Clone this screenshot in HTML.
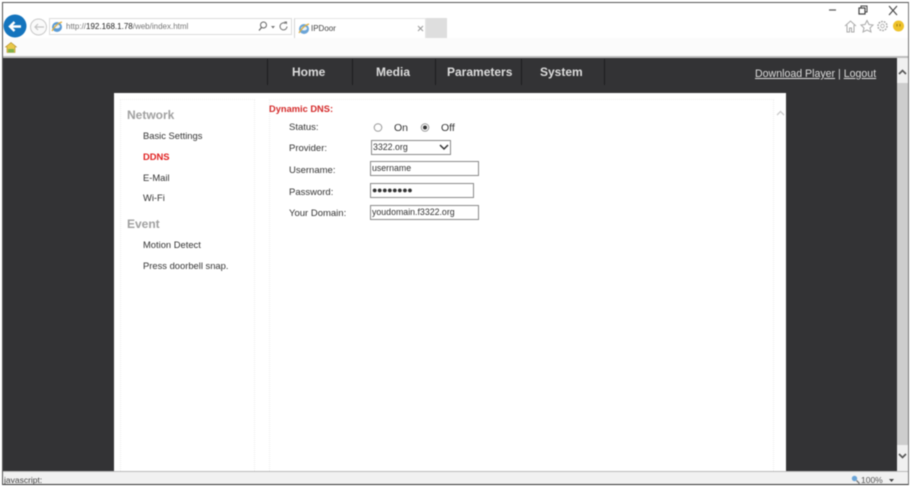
<!DOCTYPE html>
<html><head><meta charset="utf-8">
<style>
html,body{margin:0;padding:0;width:911px;height:487px;overflow:hidden;background:#fff;font-family:"Liberation Sans",sans-serif;}
#p{position:absolute;left:0;top:0;width:911px;height:487px;filter:blur(.4px);}
.a{position:absolute;white-space:nowrap;}
.l{font-size:9.500px;color:#333;}
.side{font-size:9.400px;color:#333;left:143px;}
.nav{font-size:12px;font-weight:bold;color:#ddd;top:65px;}
.sep{position:absolute;top:59px;width:1px;height:26px;background:#1d1d1f;}
.inp{position:absolute;box-sizing:border-box;border:1px solid #8a8a8a;background:#fff;height:15px;font-size:8.800px;color:#333;line-height:13px;padding-left:1px;white-space:nowrap;overflow:hidden;}
</style></head><body><div id="p">
<div class="a" style="left:2px;top:2px;width:907px;height:483px;box-sizing:border-box;border:1px solid #555;border-bottom:1px solid #333;border-right:1px solid #777;"></div>
<div class="a" style="left:3px;top:38px;width:905px;height:19px;background:#fbfbfb;"></div>
<svg class="a" style="left:3px;top:3px" width="60" height="36" viewBox="0 0 60 36">
<circle cx="12" cy="23" r="11.500" fill="#1474bd"/>
<path d="M18 23.500H7M11.500 19L7 23.500L11.500 28" stroke="#fff" stroke-width="2.400" fill="none"/>
<circle cx="35.500" cy="24" r="8" fill="#fafafa" stroke="#c9c9c9"/>
<path d="M41 24H32M35 21L32 24L35 27" stroke="#c4c4c4" stroke-width="1.200" fill="none"/>
</svg>
<div class="a" style="left:49px;top:18px;width:243px;height:17px;box-sizing:border-box;border:1px solid #dcdcdc;background:#fff;"></div>
<svg class="a" style="left:51px;top:20px" width="12" height="13" viewBox="0 0 12 13"><ellipse cx="6" cy="7" rx="5" ry="5" fill="#5b9bd5"/><ellipse cx="6" cy="6.500" rx="3" ry="2" fill="#e8f2fa"/><path d="M1 11C3 7 7 3 11 2" stroke="#e0b040" stroke-width="1.300" fill="none"/></svg>
<div class="a" style="left:66px;top:22px;font-size:8px;color:#777;">http://<span style="color:#222">192.168.1.78</span>/web/index.html</div>
<svg class="a" style="left:258px;top:20px" width="34" height="13" viewBox="0 0 34 13"><circle cx="5.500" cy="5" r="3" fill="none" stroke="#666" stroke-width="1"/><path d="M3.500 7.500L1 10.500" stroke="#666" stroke-width="1.200"/><path d="M13 6h4l-2 2.500z" fill="#777"/><path d="M27.500 3.500a3.500 3.500 0 1 0 1.500 3" fill="none" stroke="#777" stroke-width="1.100"/><path d="M26 1.500h3v3z" fill="#777"/></svg>
<div class="a" style="left:294px;top:18px;width:132px;height:20px;box-sizing:border-box;border-left:1px solid #d5d5d5;border-top:1px solid #e5e5e5;border-right:1px solid #e5e5e5;background:#fff;"></div>
<svg class="a" style="left:298px;top:22px" width="12" height="13" viewBox="0 0 12 13"><ellipse cx="6" cy="7" rx="5" ry="5" fill="#6ba5d8"/><ellipse cx="6" cy="6.500" rx="3" ry="2" fill="#e8f2fa"/><path d="M1 11C3 7 7 3 11 2" stroke="#e0b040" stroke-width="1.300" fill="none"/></svg>
<div class="a" style="left:311px;top:24px;font-size:8px;color:#444;">IPDoor</div>
<svg class="a" style="left:417px;top:25px" width="7" height="7" viewBox="0 0 7 7"><path d="M1 1L6 6M6 1L1 6" stroke="#999" stroke-width="1"/></svg>
<div class="a" style="left:426px;top:18px;width:21px;height:20px;background:#dedede;"></div>
<svg class="a" style="left:5px;top:42px" width="12" height="11" viewBox="0 0 12 11"><path d="M6 0.500L11.500 5H10V10.500H2V5H0.500z" fill="#e9c84a" stroke="#b08a20" stroke-width=".6"/><rect x="3" y="7" width="6" height="3.500" fill="#7fb24a"/></svg>
<svg class="a" style="left:826px;top:3px" width="82" height="31" viewBox="0 0 82 31">
<path d="M3 7H10" stroke="#555" stroke-width="1.200"/>
<rect x="33" y="5" width="6" height="6" fill="none" stroke="#444" stroke-width="1.200"/><path d="M35 5V3H41V9H39" fill="none" stroke="#444"/>
<path d="M63 3L71 12M71 3L63 12" stroke="#444" stroke-width="1.100"/>
<path d="M19 23L24.500 18L30 23M21 22V29H23.500V25H25.500V29H28V22" fill="none" stroke="#aaa" stroke-width="1"/>
<path d="M41 17.500L43 21.500L47 22L44 25L45 29L41 27L37 29L38 25L35 22L39 21.500z" fill="none" stroke="#aaa" stroke-width="1"/>
<circle cx="56.500" cy="23" r="4.500" fill="none" stroke="#aaa" stroke-width="1.500" stroke-dasharray="1.800 1"/><circle cx="56.500" cy="23" r="1.800" fill="none" stroke="#aaa" stroke-width=".8"/>
<circle cx="72.500" cy="23" r="5.500" fill="#eec22a"/><path d="M71 21V23.500M74 21V23.500" stroke="#8a6a10" stroke-width=".8"/>
</svg>

<div class="a" style="left:3px;top:56px;width:905px;height:2px;background:#bdbdbd;"></div>
<div class="a" style="left:3px;top:58px;width:894px;height:413px;background:#333335;"></div>
<div class="sep" style="left:267px"></div><div class="sep" style="left:352px"></div><div class="sep" style="left:435px"></div><div class="sep" style="left:521px"></div><div class="sep" style="left:604px"></div>
<div class="a nav" style="left:292px">Home</div>
<div class="a nav" style="left:376px">Media</div>
<div class="a nav" style="left:447px">Parameters</div>
<div class="a nav" style="left:540px">System</div>
<div class="a" style="left:755px;top:68px;font-size:10.600px;color:#ddd;"><u>Download Player</u> | <u>Logout</u></div>

<div class="a" style="left:897px;top:58px;width:11px;height:413px;background:#cdcdcd;"></div>
<div class="a" style="left:897px;top:58px;width:11px;height:25px;background:#f0f0f0;"></div>
<div class="a" style="left:897px;top:445px;width:11px;height:26px;background:#f0f0f0;"></div>
<svg class="a" style="left:897px;top:68px" width="11" height="8" viewBox="0 0 11 8"><path d="M2 6L5.500 2.500L9 6" fill="none" stroke="#555" stroke-width="1.600"/></svg>
<svg class="a" style="left:897px;top:452px" width="11" height="8" viewBox="0 0 11 8"><path d="M2 2L5.500 5.500L9 2" fill="none" stroke="#555" stroke-width="1.600"/></svg>

<div class="a" style="left:114px;top:93px;width:672px;height:378px;background:#fff;"></div>
<div class="a" style="left:120px;top:99px;width:135px;height:372px;box-sizing:border-box;border-left:1px dotted #eee;border-right:1px dotted #eee;border-top:1px dotted #f0f0f0;"></div>
<div class="a" style="left:269px;top:99px;width:505px;height:372px;box-sizing:border-box;border-left:1px dotted #eee;border-right:1px dotted #eee;border-top:1px dotted #f0f0f0;"></div>
<svg class="a" style="left:776px;top:110px" width="9" height="7" viewBox="0 0 9 7"><path d="M1 5L4.500 1.500L8 5" fill="none" stroke="#ccc" stroke-width="1.300"/></svg>

<div class="a" style="left:127px;top:108px;font-size:12px;font-weight:bold;color:#a0a0a0;">Network</div>
<div class="a side" style="top:130px">Basic Settings</div>
<div class="a side" style="top:151px;color:#e02020;font-weight:bold;">DDNS</div>
<div class="a side" style="top:172px">E-Mail</div>
<div class="a side" style="top:192px">Wi-Fi</div>
<div class="a" style="left:127px;top:217px;font-size:12px;font-weight:bold;color:#a0a0a0;">Event</div>
<div class="a side" style="top:239px">Motion Detect</div>
<div class="a side" style="top:260px">Press doorbell snap.</div>

<div class="a" style="left:269px;top:104px;font-size:9.300px;font-weight:bold;color:#d42a2a;">Dynamic DNS:</div>
<div class="a l" style="left:289px;top:122px">Status:</div>
<div class="a l" style="left:289px;top:143px">Provider:</div>
<div class="a l" style="left:289px;top:165px">Username:</div>
<div class="a l" style="left:289px;top:187px">Password:</div>
<div class="a l" style="left:289px;top:208px">Your Domain:</div>

<svg class="a" style="left:372px;top:122px" width="60" height="11" viewBox="0 0 60 11"><circle cx="6" cy="5.500" r="3.800" fill="#fff" stroke="#999"/><circle cx="53" cy="5.500" r="3.800" fill="#fff" stroke="#999"/><circle cx="53" cy="5.500" r="2" fill="#333"/></svg>
<div class="a" style="left:394px;top:122px;font-size:10.500px;color:#333;">On</div>
<div class="a" style="left:441px;top:122px;font-size:10.500px;color:#333;">Off</div>

<div class="inp" style="left:371px;top:140px;width:80px;">3322.org</div>
<svg class="a" style="left:439px;top:144px" width="10" height="7" viewBox="0 0 10 7"><path d="M1 1L5 5L9 1" fill="none" stroke="#333" stroke-width="1.500"/></svg>
<div class="inp" style="left:370px;top:161px;width:109px;">username</div>
<div class="inp" style="left:370px;top:183px;width:104px;font-size:9px;letter-spacing:-.4px;">●●●●●●●●</div>
<div class="inp" style="left:370px;top:205px;width:109px;">youdomain.f3322.org</div>

<div class="a" style="left:3px;top:471px;width:905px;height:13px;background:#f1f1f1;border-top:1px solid #bbb;box-sizing:border-box;"></div>
<div class="a" style="left:4px;top:475px;font-size:8.500px;color:#444;">javascript:</div>
<svg class="a" style="left:851px;top:475px" width="9" height="9" viewBox="0 0 9 9"><circle cx="3.500" cy="3.500" r="2.700" fill="#6ba5d8"/><path d="M5.500 5.500L8.500 8.500" stroke="#777" stroke-width="1.300"/></svg>
<div class="a" style="left:861px;top:475px;font-size:8.500px;color:#555;">100%</div>
<svg class="a" style="left:888px;top:478px" width="7" height="5" viewBox="0 0 7 5"><path d="M1 1H6L3.500 4z" fill="#444"/></svg>
</div></body></html>
